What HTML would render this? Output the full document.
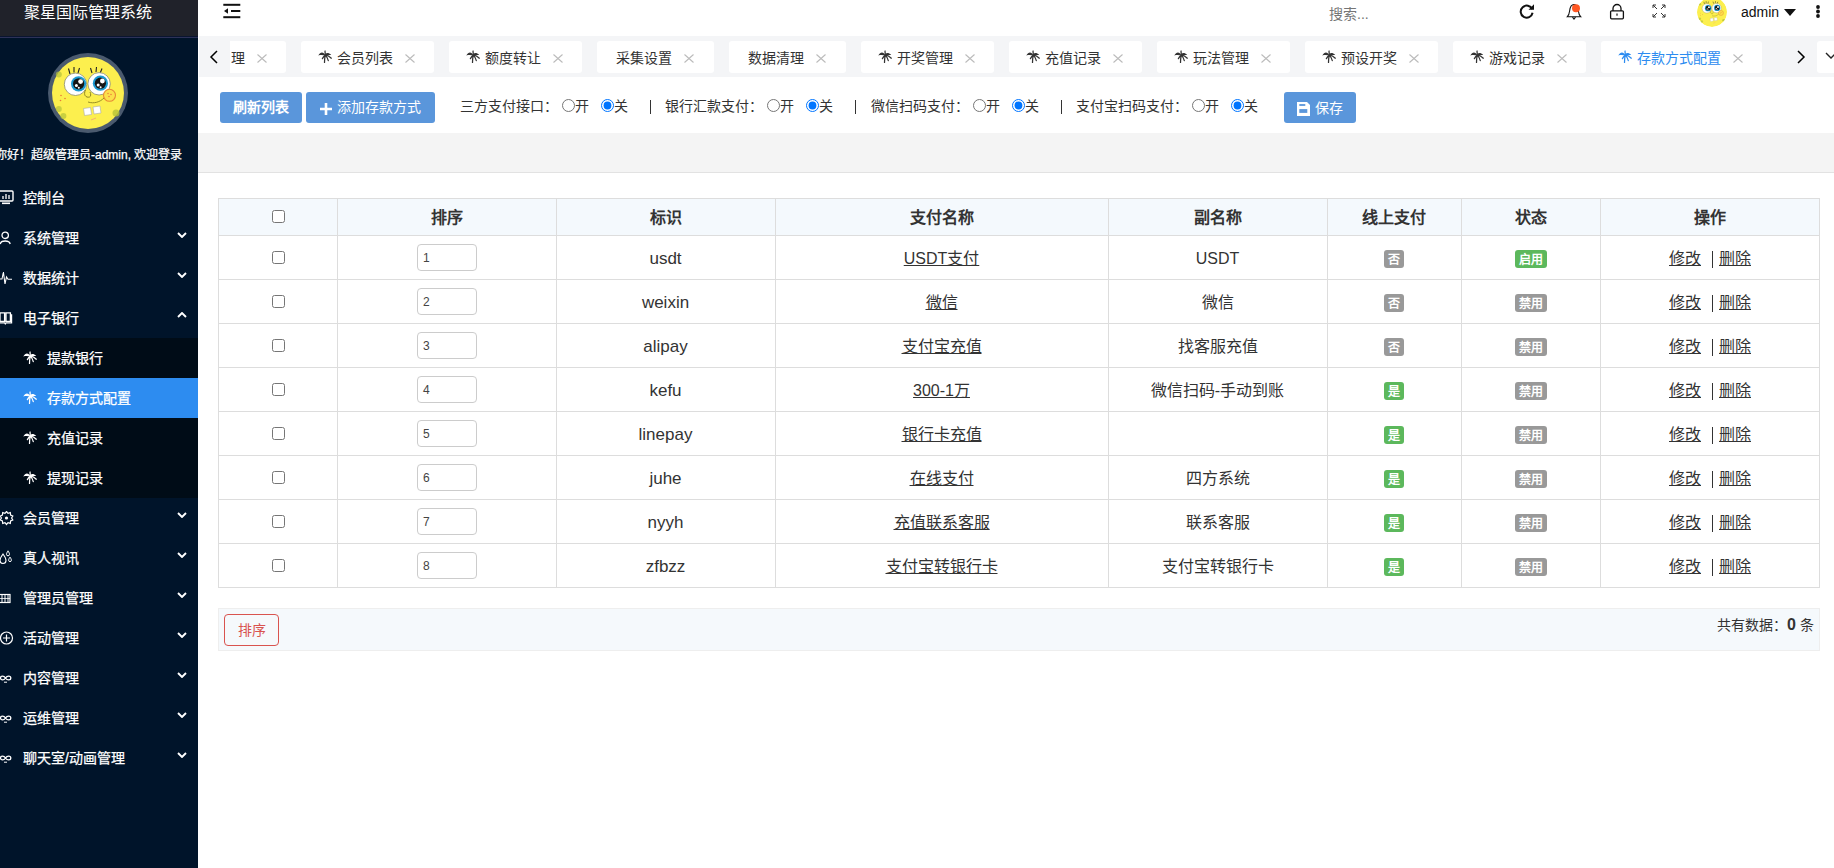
<!DOCTYPE html><html lang="zh-CN"><head><meta charset="utf-8"><style>
*{margin:0;padding:0;box-sizing:border-box}
svg{display:block}
html,body{width:1834px;height:868px;overflow:hidden;background:#fff}
body{font-family:"Liberation Sans",sans-serif;font-size:14px;color:#333;position:relative}
.a{position:absolute;white-space:nowrap}
#side{position:absolute;left:0;top:0;width:198px;height:868px;background:#00142a;overflow:hidden}
#logo{position:absolute;left:0;top:0;width:198px;height:36px;background:#20222a}
.mi{position:absolute;left:0;width:198px;height:40px;color:#fff;font-size:14px;line-height:40px;-webkit-text-stroke:0.25px #fff}
.mi .t{position:absolute;left:23px;top:0}
.mi .st{position:absolute;left:47px;top:0}
.chev{position:absolute;left:177px;width:10px;height:6px}
.tab{position:absolute;top:41px;height:32px;background:#fff;border-radius:3px;font-size:14px;line-height:32px;color:#333}
.tab .x{position:absolute;top:13px;width:10px;height:9px}
.btn{position:absolute;top:92px;height:31px;background:#5a96db;border-radius:3px;color:#fff;font-size:14px;line-height:31px}
.rd{position:absolute;top:99px;width:13px;height:13px;margin:0}
.lbl{position:absolute;top:97px;font-size:14px;line-height:18px;color:#333}
.grid{position:absolute;background:#ddd}
.cell{position:absolute;text-align:center;font-size:16px;color:#333}
.cb{position:absolute;width:13px;height:13px;margin:0}
.inp{position:absolute;width:60px;height:27px;border:1px solid #ccc;border-radius:4px;background:#fff;font-size:12px;line-height:26px;padding-left:5px;color:#444}
.tag{position:absolute;height:18px;border-radius:3px;color:#fff;font-size:12px;line-height:20px;text-align:center;font-weight:bold}
u{text-decoration:underline}
</style></head><body>
<div id="side">
<div id="logo"><div class="a" style="left:24px;top:1px;font-size:16px;line-height:24px;color:#fff">聚星国际管理系统</div></div>
<div class="a" style="left:0;top:36px;width:198px;height:1px;background:#0a1530"></div><div class="a" style="left:0;top:37px;width:198px;height:1px;background:#2d3258"></div>
<div class="a" style="left:48px;top:53px;width:80px;height:80px;border-radius:50%;background:#4a5a6e"></div>
<svg class="a" style="left:52px;top:57px" width="72" height="72" viewBox="0 0 72 72"><circle cx="36" cy="36" r="36" fill="#fcef4e"/>
<circle cx="6.8" cy="17.5" r="3" fill="#b5c23a" opacity=".7"/><circle cx="6.8" cy="52" r="3" fill="#b5c23a" opacity=".7"/><circle cx="11.4" cy="59" r="3" fill="#b5c23a" opacity=".7"/><circle cx="64" cy="56" r="3.5" fill="#b5c23a" opacity=".8"/>
<g stroke="#222" stroke-width="1.1"><path d="M18 17 L16.5 11.5 M22 15.5 L22 10 M26 16 L27.5 11 M40 16 L38.5 11 M44 15 L44.5 10 M48 16.5 L50 11.5"/></g>
<circle cx="23.5" cy="27.3" r="11.2" fill="#fff" stroke="#8a8a6a" stroke-width=".8"/>
<circle cx="47.1" cy="26.8" r="11.2" fill="#fff" stroke="#8a8a6a" stroke-width=".8"/>
<circle cx="26.6" cy="26.8" r="7.6" fill="#1b9ad2"/><circle cx="48.4" cy="26.2" r="7.6" fill="#1b9ad2"/>
<circle cx="26.6" cy="26.8" r="5.6" fill="#151515"/><circle cx="48.4" cy="26.2" r="5.6" fill="#151515"/>
<circle cx="28.6" cy="24.6" r="2.4" fill="#fff"/><circle cx="24.4" cy="28.6" r="1.5" fill="#fff"/><circle cx="26.8" cy="30.8" r="1" fill="#fff"/>
<circle cx="50.4" cy="24" r="2.4" fill="#fff"/><circle cx="46.2" cy="28" r="1.5" fill="#fff"/><circle cx="48.6" cy="30.2" r="1" fill="#fff"/>
<path d="M33.5 33 C31 38,34 41,37.5 40 C39 39.5,39 37,38 35" fill="none" stroke="#8f8420" stroke-width="1"/>
<circle cx="57.5" cy="38.3" r="6" fill="#fce04a" stroke="#e88a36" stroke-width="1.1"/>
<circle cx="56" cy="36.5" r=".7" fill="#e8703a"/><circle cx="59" cy="37.5" r=".7" fill="#e8703a"/><circle cx="57" cy="39.5" r=".7" fill="#e8703a"/>
<path d="M36 45 C42 47,48 45,52 41" fill="none" stroke="#8f8420" stroke-width=".9"/>
<path d="M31.5 51.5 L38.5 50.5 L39.5 57.5 L32.5 58.5 Z" fill="#fff" stroke="#aaa" stroke-width=".6"/><path d="M41 50 L48 49 L49 56 L42 57 Z" fill="#fff" stroke="#aaa" stroke-width=".6"/>
<circle cx="9" cy="38.5" r=".8" fill="#e87a3a"/><circle cx="13" cy="41.5" r=".8" fill="#e87a3a"/><circle cx="8.5" cy="43.5" r=".8" fill="#e87a3a"/>
<path d="M39 63 L44 61" stroke="#f0a080" stroke-width=".8"/>
</svg>
<div class="a" style="left:-5px;top:147px;font-size:12px;line-height:16px;color:#fff;-webkit-text-stroke:0.25px #fff">你好！超级管理员-admin, 欢迎登录</div>
<div class="a" style="left:0;top:338px;width:198px;height:160px;background:#000c17"></div>
<div class="a" style="left:0;top:378px;width:198px;height:40px;background:#2d8cf0"></div>
<div class="mi" style="top:178px"><span class="t">控制台</span>
<div class="a" style="left:0;top:12px;width:15px;height:15px"><svg width="15" height="15" viewBox="0 0 15 15"><rect x="-2" y="1" width="15" height="10" rx="1" fill="none" stroke="#fff" stroke-width="1.4"/><path d="M3 9 V6 M6 9 V4 M9 9 V5" stroke="#fff" stroke-width="1.3"/><rect x="2" y="12.5" width="8" height="1.6" fill="#fff"/></svg></div>
</div>
<div class="mi" style="top:218px"><span class="t">系统管理</span>
<div class="a" style="left:0;top:13px;width:15px;height:15px"><svg width="15" height="15" viewBox="0 0 15 15"><circle cx="5.2" cy="4.3" r="3.2" fill="none" stroke="#fff" stroke-width="1.3"/><path d="M0.2 13 C1 9,9.4 9,10.2 13" fill="none" stroke="#fff" stroke-width="1.3"/></svg></div>
<div class="chev" style="top:14px"><svg width="10" height="6" viewBox="0 0 10 6"><path d="M1 1 L5 5 L9 1" fill="none" stroke="#fff" stroke-width="1.9"/></svg></div>
</div>
<div class="mi" style="top:258px"><span class="t">数据统计</span>
<div class="a" style="left:0;top:13px;width:15px;height:15px"><svg width="15" height="15" viewBox="0 0 15 15"><path d="M-1 8 H2 L3.4 1 L5 13 L6.5 6 L8 8.3 H12" fill="none" stroke="#fff" stroke-width="1.1"/></svg></div>
<div class="chev" style="top:14px"><svg width="10" height="6" viewBox="0 0 10 6"><path d="M1 1 L5 5 L9 1" fill="none" stroke="#fff" stroke-width="1.9"/></svg></div>
</div>
<div class="mi" style="top:298px"><span class="t">电子银行</span>
<div class="a" style="left:0;top:14px;width:15px;height:15px"><svg width="15" height="15" viewBox="0 0 15 15"><path d="M0 0.8 H4.6 V9.4 H0 Z M6 0.8 H10.4 V9.4 H6 Z" fill="none" stroke="#fff" stroke-width="1.3"/><path d="M-1 10.9 H4.6 L5.3 11.9 L6 10.9 H11.6 V2.3" fill="none" stroke="#fff" stroke-width="1.2"/></svg></div>
<div class="chev" style="top:14px"><svg width="10" height="6" viewBox="0 0 10 6"><path d="M1 5 L5 1 L9 5" fill="none" stroke="#fff" stroke-width="1.9"/></svg></div>
</div>
<div class="mi" style="top:498px"><span class="t">会员管理</span>
<div class="a" style="left:0;top:13px;width:15px;height:15px"><svg width="15" height="15" viewBox="0 0 15 15"><path d="M6.5 0.5 L8 2.3 L10.3 1.6 L10.6 4 L12.8 5 L11.6 7 L12.8 9 L10.6 10 L10.3 12.4 L8 11.7 L6.5 13.5 L5 11.7 L2.7 12.4 L2.4 10 L0.2 9 L1.4 7 L0.2 5 L2.4 4 L2.7 1.6 L5 2.3 Z" fill="none" stroke="#fff" stroke-width="1.2"/><circle cx="6.5" cy="7" r="1.6" fill="#fff"/></svg></div>
<div class="chev" style="top:14px"><svg width="10" height="6" viewBox="0 0 10 6"><path d="M1 1 L5 5 L9 1" fill="none" stroke="#fff" stroke-width="1.9"/></svg></div>
</div>
<div class="mi" style="top:538px"><span class="t">真人视讯</span>
<div class="a" style="left:0;top:12px;width:15px;height:15px"><svg width="15" height="15" viewBox="0 0 15 15"><path d="M3 4 C3 4,0 8,0 10.5 A3 3 0 0 0 6 10.5 C6 8,3 4,3 4 Z" fill="none" stroke="#fff" stroke-width="1.1"/><path d="M8 0.8 C8 0.8,6.5 3,6.5 4.3 A1.5 1.5 0 0 0 9.5 4.3 C9.5 3,8 0.8,8 0.8 Z" fill="none" stroke="#fff" stroke-width="1"/><path d="M10 7 C10 7,8.6 9,8.6 10.2 A1.4 1.4 0 0 0 11.4 10.2 C11.4 9,10 7,10 7 Z" fill="none" stroke="#fff" stroke-width="1"/></svg></div>
<div class="chev" style="top:14px"><svg width="10" height="6" viewBox="0 0 10 6"><path d="M1 1 L5 5 L9 1" fill="none" stroke="#fff" stroke-width="1.9"/></svg></div>
</div>
<div class="mi" style="top:578px"><span class="t">管理员管理</span>
<div class="a" style="left:0;top:14px;width:15px;height:15px"><svg width="15" height="15" viewBox="0 0 15 15"><rect x="-1" y="2.5" width="11" height="8" fill="none" stroke="#fff" stroke-width="1.2"/><path d="M2 3 V10 M5 3 V10 M8 3 V10" stroke="#fff" stroke-width="1"/><path d="M-1 6.5 H10" stroke="#fff" stroke-width="0.8"/></svg></div>
<div class="chev" style="top:14px"><svg width="10" height="6" viewBox="0 0 10 6"><path d="M1 1 L5 5 L9 1" fill="none" stroke="#fff" stroke-width="1.9"/></svg></div>
</div>
<div class="mi" style="top:618px"><span class="t">活动管理</span>
<div class="a" style="left:0;top:13px;width:15px;height:15px"><svg width="15" height="15" viewBox="0 0 15 15"><circle cx="6.5" cy="7" r="6" fill="none" stroke="#fff" stroke-width="1.2"/><path d="M6.5 3.5 V10.5 M3 7 H10" stroke="#fff" stroke-width="1.2"/></svg></div>
<div class="chev" style="top:14px"><svg width="10" height="6" viewBox="0 0 10 6"><path d="M1 1 L5 5 L9 1" fill="none" stroke="#fff" stroke-width="1.9"/></svg></div>
</div>
<div class="mi" style="top:658px"><span class="t">内容管理</span>
<div class="a" style="left:0;top:14px;width:15px;height:15px"><svg width="15" height="15" viewBox="0 0 15 15"><path d="M5.5 6 C4 3.5,0.5 3.5,0.5 6 C0.5 8.5,4 8.5,5.5 6 C7 3.5,10.8 3.5,10.8 6 C10.8 8.5,7 8.5,5.5 6 Z" fill="none" stroke="#fff" stroke-width="1.3"/><path d="M4 10.2 H7" stroke="#fff" stroke-width="1"/></svg></div>
<div class="chev" style="top:14px"><svg width="10" height="6" viewBox="0 0 10 6"><path d="M1 1 L5 5 L9 1" fill="none" stroke="#fff" stroke-width="1.9"/></svg></div>
</div>
<div class="mi" style="top:698px"><span class="t">运维管理</span>
<div class="a" style="left:0;top:14px;width:15px;height:15px"><svg width="15" height="15" viewBox="0 0 15 15"><path d="M5.5 6 C4 3.5,0.5 3.5,0.5 6 C0.5 8.5,4 8.5,5.5 6 C7 3.5,10.8 3.5,10.8 6 C10.8 8.5,7 8.5,5.5 6 Z" fill="none" stroke="#fff" stroke-width="1.3"/><path d="M4 10.2 H7" stroke="#fff" stroke-width="1"/></svg></div>
<div class="chev" style="top:14px"><svg width="10" height="6" viewBox="0 0 10 6"><path d="M1 1 L5 5 L9 1" fill="none" stroke="#fff" stroke-width="1.9"/></svg></div>
</div>
<div class="mi" style="top:738px"><span class="t">聊天室/动画管理</span>
<div class="a" style="left:0;top:14px;width:15px;height:15px"><svg width="15" height="15" viewBox="0 0 15 15"><path d="M5.5 6 C4 3.5,0.5 3.5,0.5 6 C0.5 8.5,4 8.5,5.5 6 C7 3.5,10.8 3.5,10.8 6 C10.8 8.5,7 8.5,5.5 6 Z" fill="none" stroke="#fff" stroke-width="1.3"/><path d="M4 10.2 H7" stroke="#fff" stroke-width="1"/></svg></div>
<div class="chev" style="top:14px"><svg width="10" height="6" viewBox="0 0 10 6"><path d="M1 1 L5 5 L9 1" fill="none" stroke="#fff" stroke-width="1.9"/></svg></div>
</div>
<div class="mi" style="top:338px"><div class="a" style="left:23px;top:13px;width:14px;height:13px"><svg width="14" height="13" viewBox="0 0 14 13"><path d="M7.4 5.2 C5.5 1.8,2.5 1.4,0.3 5.6 C3 4.8,5.5 5,7.4 6 C9.5 5.2,11 5,13.2 5 C11 2.8,9 2.6,7.4 3.8 Z" fill="#fff"/><path d="M7.3 4.6 L7 1 M7.2 5.2 Q5.5 6.5,4.4 8.6 M7.2 5.4 Q6.5 9,6.5 12.4 M7.6 5.4 Q9.5 7.5,10.3 10.6 M7.8 5 Q11 5.8,13.3 8.2" fill="none" stroke="#fff" stroke-width="1.25" stroke-linecap="round"/></svg></div><span class="st">提款银行</span></div>
<div class="mi" style="top:378px"><div class="a" style="left:23px;top:13px;width:14px;height:13px"><svg width="14" height="13" viewBox="0 0 14 13"><path d="M7.4 5.2 C5.5 1.8,2.5 1.4,0.3 5.6 C3 4.8,5.5 5,7.4 6 C9.5 5.2,11 5,13.2 5 C11 2.8,9 2.6,7.4 3.8 Z" fill="#fff"/><path d="M7.3 4.6 L7 1 M7.2 5.2 Q5.5 6.5,4.4 8.6 M7.2 5.4 Q6.5 9,6.5 12.4 M7.6 5.4 Q9.5 7.5,10.3 10.6 M7.8 5 Q11 5.8,13.3 8.2" fill="none" stroke="#fff" stroke-width="1.25" stroke-linecap="round"/></svg></div><span class="st">存款方式配置</span></div>
<div class="mi" style="top:418px"><div class="a" style="left:23px;top:13px;width:14px;height:13px"><svg width="14" height="13" viewBox="0 0 14 13"><path d="M7.4 5.2 C5.5 1.8,2.5 1.4,0.3 5.6 C3 4.8,5.5 5,7.4 6 C9.5 5.2,11 5,13.2 5 C11 2.8,9 2.6,7.4 3.8 Z" fill="#fff"/><path d="M7.3 4.6 L7 1 M7.2 5.2 Q5.5 6.5,4.4 8.6 M7.2 5.4 Q6.5 9,6.5 12.4 M7.6 5.4 Q9.5 7.5,10.3 10.6 M7.8 5 Q11 5.8,13.3 8.2" fill="none" stroke="#fff" stroke-width="1.25" stroke-linecap="round"/></svg></div><span class="st">充值记录</span></div>
<div class="mi" style="top:458px"><div class="a" style="left:23px;top:13px;width:14px;height:13px"><svg width="14" height="13" viewBox="0 0 14 13"><path d="M7.4 5.2 C5.5 1.8,2.5 1.4,0.3 5.6 C3 4.8,5.5 5,7.4 6 C9.5 5.2,11 5,13.2 5 C11 2.8,9 2.6,7.4 3.8 Z" fill="#fff"/><path d="M7.3 4.6 L7 1 M7.2 5.2 Q5.5 6.5,4.4 8.6 M7.2 5.4 Q6.5 9,6.5 12.4 M7.6 5.4 Q9.5 7.5,10.3 10.6 M7.8 5 Q11 5.8,13.3 8.2" fill="none" stroke="#fff" stroke-width="1.25" stroke-linecap="round"/></svg></div><span class="st">提现记录</span></div>
</div>
<svg class="a" style="left:223px;top:3px" width="18" height="17" viewBox="0 0 18 17">
<rect x="0.3" y="0.8" width="17" height="2" fill="#111"/><rect x="8" y="7" width="9.3" height="2" fill="#111"/><rect x="0.3" y="13.2" width="17" height="2" fill="#111"/>
<path d="M1 8 L5 5.2 L5 10.8 Z" fill="#111"/></svg>
<div class="a" style="left:1329px;top:6px;font-size:14px;line-height:16px;color:#757575">搜索...</div>
<svg class="a" style="left:1519px;top:3px" width="16" height="16" viewBox="0 0 16 16"><path d="M13.2 6.2 A6 6 0 1 0 13.6 9.8" fill="none" stroke="#111" stroke-width="2"/><path d="M9.5 6.8 L15 6.8 L15 1.3 Z" fill="#111"/></svg>
<svg class="a" style="left:1566px;top:2px" width="17" height="19" viewBox="0 0 17 19"><path d="M8 2.5 C4.8 2.5,4 5,3.6 9 C3.3 12,2.6 13.5,1.2 14.8 L14.8 14.8 C13.4 13.5,12.7 12,12.4 9 C12,5,11.2 2.5,8 2.5 Z" fill="#fff" stroke="#111" stroke-width="1.1"/><path d="M6.5 15.2 L8 17.2 L9.5 15.2" fill="none" stroke="#111" stroke-width="1.1"/><circle cx="10" cy="6.3" r="4" fill="#ff5722"/></svg>
<svg class="a" style="left:1609px;top:3px" width="16" height="17" viewBox="0 0 16 17"><path d="M4 8 V5.5 A4 4 0 0 1 12 5.5 V8" fill="none" stroke="#111" stroke-width="1.3"/><rect x="1.6" y="7.8" width="12.8" height="8" rx="1" fill="none" stroke="#111" stroke-width="1.3"/><rect x="7.4" y="10.5" width="1.2" height="2.2" fill="#111"/></svg>
<svg class="a" style="left:1652px;top:4px" width="14" height="14" viewBox="0 0 14 14"><g fill="none" stroke="#333" stroke-width="1"><path d="M1 1 L5 5 M1 1 H4 M1 1 V4"/><path d="M13 1 L9 5 M13 1 H10 M13 1 V4"/><path d="M1 13 L5 9 M1 13 H4 M1 13 V10"/><path d="M13 13 L9 9 M13 13 H10 M13 13 V10"/></g></svg>
<div class="a" style="left:1697px;top:-3px;width:30px;height:30px;border-radius:50%;overflow:hidden"><svg width="30" height="30" viewBox="0 0 72 72"><circle cx="36" cy="36" r="36" fill="#fcef4e"/>
<circle cx="6.8" cy="17.5" r="3" fill="#b5c23a" opacity=".7"/><circle cx="6.8" cy="52" r="3" fill="#b5c23a" opacity=".7"/><circle cx="11.4" cy="59" r="3" fill="#b5c23a" opacity=".7"/><circle cx="64" cy="56" r="3.5" fill="#b5c23a" opacity=".8"/>
<g stroke="#222" stroke-width="1.1"><path d="M18 17 L16.5 11.5 M22 15.5 L22 10 M26 16 L27.5 11 M40 16 L38.5 11 M44 15 L44.5 10 M48 16.5 L50 11.5"/></g>
<circle cx="23.5" cy="27.3" r="11.2" fill="#fff" stroke="#8a8a6a" stroke-width=".8"/>
<circle cx="47.1" cy="26.8" r="11.2" fill="#fff" stroke="#8a8a6a" stroke-width=".8"/>
<circle cx="26.6" cy="26.8" r="7.6" fill="#1b9ad2"/><circle cx="48.4" cy="26.2" r="7.6" fill="#1b9ad2"/>
<circle cx="26.6" cy="26.8" r="5.6" fill="#151515"/><circle cx="48.4" cy="26.2" r="5.6" fill="#151515"/>
<circle cx="28.6" cy="24.6" r="2.4" fill="#fff"/><circle cx="24.4" cy="28.6" r="1.5" fill="#fff"/><circle cx="26.8" cy="30.8" r="1" fill="#fff"/>
<circle cx="50.4" cy="24" r="2.4" fill="#fff"/><circle cx="46.2" cy="28" r="1.5" fill="#fff"/><circle cx="48.6" cy="30.2" r="1" fill="#fff"/>
<path d="M33.5 33 C31 38,34 41,37.5 40 C39 39.5,39 37,38 35" fill="none" stroke="#8f8420" stroke-width="1"/>
<circle cx="57.5" cy="38.3" r="6" fill="#fce04a" stroke="#e88a36" stroke-width="1.1"/>
<circle cx="56" cy="36.5" r=".7" fill="#e8703a"/><circle cx="59" cy="37.5" r=".7" fill="#e8703a"/><circle cx="57" cy="39.5" r=".7" fill="#e8703a"/>
<path d="M36 45 C42 47,48 45,52 41" fill="none" stroke="#8f8420" stroke-width=".9"/>
<path d="M31.5 51.5 L38.5 50.5 L39.5 57.5 L32.5 58.5 Z" fill="#fff" stroke="#aaa" stroke-width=".6"/><path d="M41 50 L48 49 L49 56 L42 57 Z" fill="#fff" stroke="#aaa" stroke-width=".6"/>
<circle cx="9" cy="38.5" r=".8" fill="#e87a3a"/><circle cx="13" cy="41.5" r=".8" fill="#e87a3a"/><circle cx="8.5" cy="43.5" r=".8" fill="#e87a3a"/>
<path d="M39 63 L44 61" stroke="#f0a080" stroke-width=".8"/>
</svg></div>
<div class="a" style="left:1741px;top:4px;font-size:14px;line-height:16px;color:#111">admin</div>
<svg class="a" style="left:1784px;top:9px" width="12" height="7" viewBox="0 0 12 7"><path d="M0 0 H12 L6 7 Z" fill="#111"/></svg>
<svg class="a" style="left:1815px;top:5px" width="6" height="14" viewBox="0 0 6 14"><circle cx="3" cy="2" r="1.9" fill="#111"/><circle cx="3" cy="6.5" r="1.9" fill="#111"/><circle cx="3" cy="11" r="1.9" fill="#111"/></svg>
<div class="a" style="left:198px;top:36px;width:1636px;height:41px;background:#f4f5f7"></div>
<div class="a" style="left:198px;top:36px;width:1px;height:41px;background:#fff"></div>
<div class="a" style="left:230px;top:41px;width:56px;height:32px;background:#fff;border-radius:0 3px 3px 0"></div>
<div class="a" style="left:230px;top:41px;width:16px;height:32px;overflow:hidden;font-size:14px;line-height:32px;color:#333"><span style="position:absolute;right:1px;top:1px">理</span></div>
<div class="a" style="left:257px;top:54px"><svg width="10" height="9" viewBox="0 0 10 9"><path d="M0.5 0.5 L9.5 8.5 M9.5 0.5 L0.5 8.5" stroke="#bbb" stroke-width="1.1"/></svg></div>
<svg class="a" style="left:209px;top:50px" width="10" height="14" viewBox="0 0 10 14"><path d="M8 1 L2 7 L8 13" fill="none" stroke="#000" stroke-width="1.5"/></svg>
<div class="tab" style="left:301px;width:133px;color:#333">
<div class="a" style="left:17px;top:9px;width:14px;height:13px"><svg width="14" height="13" viewBox="0 0 14 13"><path d="M7.4 5.2 C5.5 1.8,2.5 1.4,0.3 5.6 C3 4.8,5.5 5,7.4 6 C9.5 5.2,11 5,13.2 5 C11 2.8,9 2.6,7.4 3.8 Z" fill="#333"/><path d="M7.3 4.6 L7 1 M7.2 5.2 Q5.5 6.5,4.4 8.6 M7.2 5.4 Q6.5 9,6.5 12.4 M7.6 5.4 Q9.5 7.5,10.3 10.6 M7.8 5 Q11 5.8,13.3 8.2" fill="none" stroke="#333" stroke-width="1.25" stroke-linecap="round"/></svg></div>
<span class="a" style="left:36px;top:1px">会员列表</span>
<div class="x" style="left:104px"><svg width="10" height="9" viewBox="0 0 10 9"><path d="M0.5 0.5 L9.5 8.5 M9.5 0.5 L0.5 8.5" stroke="#bbb" stroke-width="1.1"/></svg></div>
</div>
<div class="tab" style="left:449px;width:133px;color:#333">
<div class="a" style="left:17px;top:9px;width:14px;height:13px"><svg width="14" height="13" viewBox="0 0 14 13"><path d="M7.4 5.2 C5.5 1.8,2.5 1.4,0.3 5.6 C3 4.8,5.5 5,7.4 6 C9.5 5.2,11 5,13.2 5 C11 2.8,9 2.6,7.4 3.8 Z" fill="#333"/><path d="M7.3 4.6 L7 1 M7.2 5.2 Q5.5 6.5,4.4 8.6 M7.2 5.4 Q6.5 9,6.5 12.4 M7.6 5.4 Q9.5 7.5,10.3 10.6 M7.8 5 Q11 5.8,13.3 8.2" fill="none" stroke="#333" stroke-width="1.25" stroke-linecap="round"/></svg></div>
<span class="a" style="left:36px;top:1px">额度转让</span>
<div class="x" style="left:104px"><svg width="10" height="9" viewBox="0 0 10 9"><path d="M0.5 0.5 L9.5 8.5 M9.5 0.5 L0.5 8.5" stroke="#bbb" stroke-width="1.1"/></svg></div>
</div>
<div class="tab" style="left:597px;width:117px;color:#333">
<span class="a" style="left:19px;top:1px">采集设置</span>
<div class="x" style="left:87px"><svg width="10" height="9" viewBox="0 0 10 9"><path d="M0.5 0.5 L9.5 8.5 M9.5 0.5 L0.5 8.5" stroke="#bbb" stroke-width="1.1"/></svg></div>
</div>
<div class="tab" style="left:729px;width:117px;color:#333">
<span class="a" style="left:19px;top:1px">数据清理</span>
<div class="x" style="left:87px"><svg width="10" height="9" viewBox="0 0 10 9"><path d="M0.5 0.5 L9.5 8.5 M9.5 0.5 L0.5 8.5" stroke="#bbb" stroke-width="1.1"/></svg></div>
</div>
<div class="tab" style="left:861px;width:133px;color:#333">
<div class="a" style="left:17px;top:9px;width:14px;height:13px"><svg width="14" height="13" viewBox="0 0 14 13"><path d="M7.4 5.2 C5.5 1.8,2.5 1.4,0.3 5.6 C3 4.8,5.5 5,7.4 6 C9.5 5.2,11 5,13.2 5 C11 2.8,9 2.6,7.4 3.8 Z" fill="#333"/><path d="M7.3 4.6 L7 1 M7.2 5.2 Q5.5 6.5,4.4 8.6 M7.2 5.4 Q6.5 9,6.5 12.4 M7.6 5.4 Q9.5 7.5,10.3 10.6 M7.8 5 Q11 5.8,13.3 8.2" fill="none" stroke="#333" stroke-width="1.25" stroke-linecap="round"/></svg></div>
<span class="a" style="left:36px;top:1px">开奖管理</span>
<div class="x" style="left:104px"><svg width="10" height="9" viewBox="0 0 10 9"><path d="M0.5 0.5 L9.5 8.5 M9.5 0.5 L0.5 8.5" stroke="#bbb" stroke-width="1.1"/></svg></div>
</div>
<div class="tab" style="left:1009px;width:133px;color:#333">
<div class="a" style="left:17px;top:9px;width:14px;height:13px"><svg width="14" height="13" viewBox="0 0 14 13"><path d="M7.4 5.2 C5.5 1.8,2.5 1.4,0.3 5.6 C3 4.8,5.5 5,7.4 6 C9.5 5.2,11 5,13.2 5 C11 2.8,9 2.6,7.4 3.8 Z" fill="#333"/><path d="M7.3 4.6 L7 1 M7.2 5.2 Q5.5 6.5,4.4 8.6 M7.2 5.4 Q6.5 9,6.5 12.4 M7.6 5.4 Q9.5 7.5,10.3 10.6 M7.8 5 Q11 5.8,13.3 8.2" fill="none" stroke="#333" stroke-width="1.25" stroke-linecap="round"/></svg></div>
<span class="a" style="left:36px;top:1px">充值记录</span>
<div class="x" style="left:104px"><svg width="10" height="9" viewBox="0 0 10 9"><path d="M0.5 0.5 L9.5 8.5 M9.5 0.5 L0.5 8.5" stroke="#bbb" stroke-width="1.1"/></svg></div>
</div>
<div class="tab" style="left:1157px;width:133px;color:#333">
<div class="a" style="left:17px;top:9px;width:14px;height:13px"><svg width="14" height="13" viewBox="0 0 14 13"><path d="M7.4 5.2 C5.5 1.8,2.5 1.4,0.3 5.6 C3 4.8,5.5 5,7.4 6 C9.5 5.2,11 5,13.2 5 C11 2.8,9 2.6,7.4 3.8 Z" fill="#333"/><path d="M7.3 4.6 L7 1 M7.2 5.2 Q5.5 6.5,4.4 8.6 M7.2 5.4 Q6.5 9,6.5 12.4 M7.6 5.4 Q9.5 7.5,10.3 10.6 M7.8 5 Q11 5.8,13.3 8.2" fill="none" stroke="#333" stroke-width="1.25" stroke-linecap="round"/></svg></div>
<span class="a" style="left:36px;top:1px">玩法管理</span>
<div class="x" style="left:104px"><svg width="10" height="9" viewBox="0 0 10 9"><path d="M0.5 0.5 L9.5 8.5 M9.5 0.5 L0.5 8.5" stroke="#bbb" stroke-width="1.1"/></svg></div>
</div>
<div class="tab" style="left:1305px;width:133px;color:#333">
<div class="a" style="left:17px;top:9px;width:14px;height:13px"><svg width="14" height="13" viewBox="0 0 14 13"><path d="M7.4 5.2 C5.5 1.8,2.5 1.4,0.3 5.6 C3 4.8,5.5 5,7.4 6 C9.5 5.2,11 5,13.2 5 C11 2.8,9 2.6,7.4 3.8 Z" fill="#333"/><path d="M7.3 4.6 L7 1 M7.2 5.2 Q5.5 6.5,4.4 8.6 M7.2 5.4 Q6.5 9,6.5 12.4 M7.6 5.4 Q9.5 7.5,10.3 10.6 M7.8 5 Q11 5.8,13.3 8.2" fill="none" stroke="#333" stroke-width="1.25" stroke-linecap="round"/></svg></div>
<span class="a" style="left:36px;top:1px">预设开奖</span>
<div class="x" style="left:104px"><svg width="10" height="9" viewBox="0 0 10 9"><path d="M0.5 0.5 L9.5 8.5 M9.5 0.5 L0.5 8.5" stroke="#bbb" stroke-width="1.1"/></svg></div>
</div>
<div class="tab" style="left:1453px;width:133px;color:#333">
<div class="a" style="left:17px;top:9px;width:14px;height:13px"><svg width="14" height="13" viewBox="0 0 14 13"><path d="M7.4 5.2 C5.5 1.8,2.5 1.4,0.3 5.6 C3 4.8,5.5 5,7.4 6 C9.5 5.2,11 5,13.2 5 C11 2.8,9 2.6,7.4 3.8 Z" fill="#333"/><path d="M7.3 4.6 L7 1 M7.2 5.2 Q5.5 6.5,4.4 8.6 M7.2 5.4 Q6.5 9,6.5 12.4 M7.6 5.4 Q9.5 7.5,10.3 10.6 M7.8 5 Q11 5.8,13.3 8.2" fill="none" stroke="#333" stroke-width="1.25" stroke-linecap="round"/></svg></div>
<span class="a" style="left:36px;top:1px">游戏记录</span>
<div class="x" style="left:104px"><svg width="10" height="9" viewBox="0 0 10 9"><path d="M0.5 0.5 L9.5 8.5 M9.5 0.5 L0.5 8.5" stroke="#bbb" stroke-width="1.1"/></svg></div>
</div>
<div class="tab" style="left:1601px;width:161px;color:#2d8cf0">
<div class="a" style="left:17px;top:9px;width:14px;height:13px"><svg width="14" height="13" viewBox="0 0 14 13"><path d="M7.4 5.2 C5.5 1.8,2.5 1.4,0.3 5.6 C3 4.8,5.5 5,7.4 6 C9.5 5.2,11 5,13.2 5 C11 2.8,9 2.6,7.4 3.8 Z" fill="#2d8cf0"/><path d="M7.3 4.6 L7 1 M7.2 5.2 Q5.5 6.5,4.4 8.6 M7.2 5.4 Q6.5 9,6.5 12.4 M7.6 5.4 Q9.5 7.5,10.3 10.6 M7.8 5 Q11 5.8,13.3 8.2" fill="none" stroke="#2d8cf0" stroke-width="1.25" stroke-linecap="round"/></svg></div>
<span class="a" style="left:36px;top:1px">存款方式配置</span>
<div class="x" style="left:132px"><svg width="10" height="9" viewBox="0 0 10 9"><path d="M0.5 0.5 L9.5 8.5 M9.5 0.5 L0.5 8.5" stroke="#bbb" stroke-width="1.1"/></svg></div>
</div>
<svg class="a" style="left:1796px;top:50px" width="10" height="14" viewBox="0 0 10 14"><path d="M2 1 L8 7 L2 13" fill="none" stroke="#000" stroke-width="1.5"/></svg>
<div class="a" style="left:1817px;top:41px;width:30px;height:32px;background:#fff;border-radius:3px"></div>
<svg class="a" style="left:1825px;top:52px" width="10" height="8" viewBox="0 0 10 8"><path d="M1 1 L6 6 L11 1" fill="none" stroke="#222" stroke-width="1.4"/></svg>
<div class="btn" style="left:220px;width:82px;text-align:center;font-weight:bold">刷新列表</div>
<div class="btn" style="left:306px;width:129px"><svg class="a" style="left:14px;top:11px" width="12" height="12" viewBox="0 0 12 12"><path d="M6 0 V12 M0 6 H12" stroke="#fff" stroke-width="2.6"/></svg><span class="a" style="left:31px;top:0">添加存款方式</span></div>
<div class="lbl" style="left:460px">三方支付接口：</div>
<input type="radio" class="rd" name="g0" style="left:562px">
<div class="lbl" style="left:575px">开</div>
<input type="radio" class="rd" name="g0" checked style="left:601px">
<div class="lbl" style="left:614px">关</div>
<div class="a" style="left:650px;top:100px;width:1px;height:14px;background:#333"></div>
<div class="lbl" style="left:665px">银行汇款支付：</div>
<input type="radio" class="rd" name="g1" style="left:767px">
<div class="lbl" style="left:780px">开</div>
<input type="radio" class="rd" name="g1" checked style="left:806px">
<div class="lbl" style="left:819px">关</div>
<div class="a" style="left:855px;top:100px;width:1px;height:14px;background:#333"></div>
<div class="lbl" style="left:871px">微信扫码支付：</div>
<input type="radio" class="rd" name="g2" style="left:973px">
<div class="lbl" style="left:986px">开</div>
<input type="radio" class="rd" name="g2" checked style="left:1012px">
<div class="lbl" style="left:1025px">关</div>
<div class="a" style="left:1061px;top:100px;width:1px;height:14px;background:#333"></div>
<div class="lbl" style="left:1076px">支付宝扫码支付：</div>
<input type="radio" class="rd" name="g3" style="left:1192px">
<div class="lbl" style="left:1205px">开</div>
<input type="radio" class="rd" name="g3" checked style="left:1231px">
<div class="lbl" style="left:1244px">关</div>
<div class="btn" style="left:1284px;width:72px"><svg class="a" style="left:13px;top:10px" width="13" height="14" viewBox="0 0 13 14"><path d="M0 0 H10 L13 3 V14 H0 Z" fill="#fff"/><rect x="2.3" y="2.1" width="6" height="1.8" fill="#5a96db"/><rect x="2.3" y="7.1" width="8" height="3.8" fill="#5a96db"/></svg><span class="a" style="left:31px;top:1px">保存</span></div>
<div class="a" style="left:198px;top:133px;width:1636px;height:40px;background:#f4f4f4;border-bottom:1px solid #e2e2e2"></div>
<div class="a" style="left:218px;top:198px;width:1602px;height:37px;background:#f4f9fd"></div>
<div class="grid" style="left:218px;top:198px;width:1px;height:390px"></div>
<div class="grid" style="left:337px;top:198px;width:1px;height:390px"></div>
<div class="grid" style="left:556px;top:198px;width:1px;height:390px"></div>
<div class="grid" style="left:775px;top:198px;width:1px;height:390px"></div>
<div class="grid" style="left:1108px;top:198px;width:1px;height:390px"></div>
<div class="grid" style="left:1327px;top:198px;width:1px;height:390px"></div>
<div class="grid" style="left:1461px;top:198px;width:1px;height:390px"></div>
<div class="grid" style="left:1600px;top:198px;width:1px;height:390px"></div>
<div class="grid" style="left:1819px;top:198px;width:1px;height:390px"></div>
<div class="grid" style="left:218px;top:198px;width:1602px;height:1px"></div>
<div class="grid" style="left:218px;top:235px;width:1602px;height:1px"></div>
<div class="grid" style="left:218px;top:279px;width:1602px;height:1px"></div>
<div class="grid" style="left:218px;top:323px;width:1602px;height:1px"></div>
<div class="grid" style="left:218px;top:367px;width:1602px;height:1px"></div>
<div class="grid" style="left:218px;top:411px;width:1602px;height:1px"></div>
<div class="grid" style="left:218px;top:455px;width:1602px;height:1px"></div>
<div class="grid" style="left:218px;top:499px;width:1602px;height:1px"></div>
<div class="grid" style="left:218px;top:543px;width:1602px;height:1px"></div>
<div class="grid" style="left:218px;top:587px;width:1602px;height:1px"></div>
<input type="checkbox" class="cb" style="left:272px;top:210px">
<div class="cell" style="left:337px;top:199px;width:219px;line-height:37px;font-weight:bold">排序</div>
<div class="cell" style="left:556px;top:199px;width:219px;line-height:37px;font-weight:bold">标识</div>
<div class="cell" style="left:775px;top:199px;width:333px;line-height:37px;font-weight:bold">支付名称</div>
<div class="cell" style="left:1108px;top:199px;width:219px;line-height:37px;font-weight:bold">副名称</div>
<div class="cell" style="left:1327px;top:199px;width:134px;line-height:37px;font-weight:bold">线上支付</div>
<div class="cell" style="left:1461px;top:199px;width:139px;line-height:37px;font-weight:bold">状态</div>
<div class="cell" style="left:1600px;top:199px;width:219px;line-height:37px;font-weight:bold">操作</div>
<input type="checkbox" class="cb" style="left:272px;top:251px">
<div class="inp" style="left:417px;top:244px">1</div>
<div class="cell" style="left:556px;top:237px;width:219px;line-height:44px"><span style="font-size:17px">usdt</span></div>
<div class="cell" style="left:775px;top:237px;width:333px;line-height:44px"><u>USDT支付</u></div>
<div class="cell" style="left:1108px;top:237px;width:219px;line-height:44px">USDT</div>
<div class="tag" style="left:1384px;top:250px;width:20px;background:#999">否</div>
<div class="tag" style="left:1515px;top:250px;width:32px;background:#5cb85c">启用</div>
<div class="cell" style="left:1669px;top:237px;width:32px;line-height:44px;text-align:left"><u>修改</u></div>
<div class="a" style="left:1712px;top:251px;width:1px;height:17px;background:#333"></div>
<div class="cell" style="left:1719px;top:237px;width:32px;line-height:44px;text-align:left"><u>删除</u></div>
<input type="checkbox" class="cb" style="left:272px;top:295px">
<div class="inp" style="left:417px;top:288px">2</div>
<div class="cell" style="left:556px;top:281px;width:219px;line-height:44px"><span style="font-size:17px">weixin</span></div>
<div class="cell" style="left:775px;top:281px;width:333px;line-height:44px"><u>微信</u></div>
<div class="cell" style="left:1108px;top:281px;width:219px;line-height:44px">微信</div>
<div class="tag" style="left:1384px;top:294px;width:20px;background:#999">否</div>
<div class="tag" style="left:1515px;top:294px;width:32px;background:#999">禁用</div>
<div class="cell" style="left:1669px;top:281px;width:32px;line-height:44px;text-align:left"><u>修改</u></div>
<div class="a" style="left:1712px;top:295px;width:1px;height:17px;background:#333"></div>
<div class="cell" style="left:1719px;top:281px;width:32px;line-height:44px;text-align:left"><u>删除</u></div>
<input type="checkbox" class="cb" style="left:272px;top:339px">
<div class="inp" style="left:417px;top:332px">3</div>
<div class="cell" style="left:556px;top:325px;width:219px;line-height:44px"><span style="font-size:17px">alipay</span></div>
<div class="cell" style="left:775px;top:325px;width:333px;line-height:44px"><u>支付宝充值</u></div>
<div class="cell" style="left:1108px;top:325px;width:219px;line-height:44px">找客服充值</div>
<div class="tag" style="left:1384px;top:338px;width:20px;background:#999">否</div>
<div class="tag" style="left:1515px;top:338px;width:32px;background:#999">禁用</div>
<div class="cell" style="left:1669px;top:325px;width:32px;line-height:44px;text-align:left"><u>修改</u></div>
<div class="a" style="left:1712px;top:339px;width:1px;height:17px;background:#333"></div>
<div class="cell" style="left:1719px;top:325px;width:32px;line-height:44px;text-align:left"><u>删除</u></div>
<input type="checkbox" class="cb" style="left:272px;top:383px">
<div class="inp" style="left:417px;top:376px">4</div>
<div class="cell" style="left:556px;top:369px;width:219px;line-height:44px"><span style="font-size:17px">kefu</span></div>
<div class="cell" style="left:775px;top:369px;width:333px;line-height:44px"><u>300-1万</u></div>
<div class="cell" style="left:1108px;top:369px;width:219px;line-height:44px">微信扫码-手动到账</div>
<div class="tag" style="left:1384px;top:382px;width:20px;background:#5cb85c">是</div>
<div class="tag" style="left:1515px;top:382px;width:32px;background:#999">禁用</div>
<div class="cell" style="left:1669px;top:369px;width:32px;line-height:44px;text-align:left"><u>修改</u></div>
<div class="a" style="left:1712px;top:383px;width:1px;height:17px;background:#333"></div>
<div class="cell" style="left:1719px;top:369px;width:32px;line-height:44px;text-align:left"><u>删除</u></div>
<input type="checkbox" class="cb" style="left:272px;top:427px">
<div class="inp" style="left:417px;top:420px">5</div>
<div class="cell" style="left:556px;top:413px;width:219px;line-height:44px"><span style="font-size:17px">linepay</span></div>
<div class="cell" style="left:775px;top:413px;width:333px;line-height:44px"><u>银行卡充值</u></div>
<div class="cell" style="left:1108px;top:413px;width:219px;line-height:44px"></div>
<div class="tag" style="left:1384px;top:426px;width:20px;background:#5cb85c">是</div>
<div class="tag" style="left:1515px;top:426px;width:32px;background:#999">禁用</div>
<div class="cell" style="left:1669px;top:413px;width:32px;line-height:44px;text-align:left"><u>修改</u></div>
<div class="a" style="left:1712px;top:427px;width:1px;height:17px;background:#333"></div>
<div class="cell" style="left:1719px;top:413px;width:32px;line-height:44px;text-align:left"><u>删除</u></div>
<input type="checkbox" class="cb" style="left:272px;top:471px">
<div class="inp" style="left:417px;top:464px">6</div>
<div class="cell" style="left:556px;top:457px;width:219px;line-height:44px"><span style="font-size:17px">juhe</span></div>
<div class="cell" style="left:775px;top:457px;width:333px;line-height:44px"><u>在线支付</u></div>
<div class="cell" style="left:1108px;top:457px;width:219px;line-height:44px">四方系统</div>
<div class="tag" style="left:1384px;top:470px;width:20px;background:#5cb85c">是</div>
<div class="tag" style="left:1515px;top:470px;width:32px;background:#999">禁用</div>
<div class="cell" style="left:1669px;top:457px;width:32px;line-height:44px;text-align:left"><u>修改</u></div>
<div class="a" style="left:1712px;top:471px;width:1px;height:17px;background:#333"></div>
<div class="cell" style="left:1719px;top:457px;width:32px;line-height:44px;text-align:left"><u>删除</u></div>
<input type="checkbox" class="cb" style="left:272px;top:515px">
<div class="inp" style="left:417px;top:508px">7</div>
<div class="cell" style="left:556px;top:501px;width:219px;line-height:44px"><span style="font-size:17px">nyyh</span></div>
<div class="cell" style="left:775px;top:501px;width:333px;line-height:44px"><u>充值联系客服</u></div>
<div class="cell" style="left:1108px;top:501px;width:219px;line-height:44px">联系客服</div>
<div class="tag" style="left:1384px;top:514px;width:20px;background:#5cb85c">是</div>
<div class="tag" style="left:1515px;top:514px;width:32px;background:#999">禁用</div>
<div class="cell" style="left:1669px;top:501px;width:32px;line-height:44px;text-align:left"><u>修改</u></div>
<div class="a" style="left:1712px;top:515px;width:1px;height:17px;background:#333"></div>
<div class="cell" style="left:1719px;top:501px;width:32px;line-height:44px;text-align:left"><u>删除</u></div>
<input type="checkbox" class="cb" style="left:272px;top:559px">
<div class="inp" style="left:417px;top:552px">8</div>
<div class="cell" style="left:556px;top:545px;width:219px;line-height:44px"><span style="font-size:17px">zfbzz</span></div>
<div class="cell" style="left:775px;top:545px;width:333px;line-height:44px"><u>支付宝转银行卡</u></div>
<div class="cell" style="left:1108px;top:545px;width:219px;line-height:44px">支付宝转银行卡</div>
<div class="tag" style="left:1384px;top:558px;width:20px;background:#5cb85c">是</div>
<div class="tag" style="left:1515px;top:558px;width:32px;background:#999">禁用</div>
<div class="cell" style="left:1669px;top:545px;width:32px;line-height:44px;text-align:left"><u>修改</u></div>
<div class="a" style="left:1712px;top:559px;width:1px;height:17px;background:#333"></div>
<div class="cell" style="left:1719px;top:545px;width:32px;line-height:44px;text-align:left"><u>删除</u></div>
<div class="a" style="left:218px;top:608px;width:1602px;height:43px;background:#f5f9fc;border:1px solid #eee"></div>
<div class="a" style="left:224px;top:614px;width:55px;height:32px;border:1px solid #d9534f;border-radius:4px;color:#d9534f;font-size:14px;line-height:30px;text-align:center">排序</div>
<div class="a" style="left:1717px;top:616px;font-size:14px;line-height:18px;color:#333">共有数据：<b style="font-size:16px">0</b> 条</div>
</body></html>
